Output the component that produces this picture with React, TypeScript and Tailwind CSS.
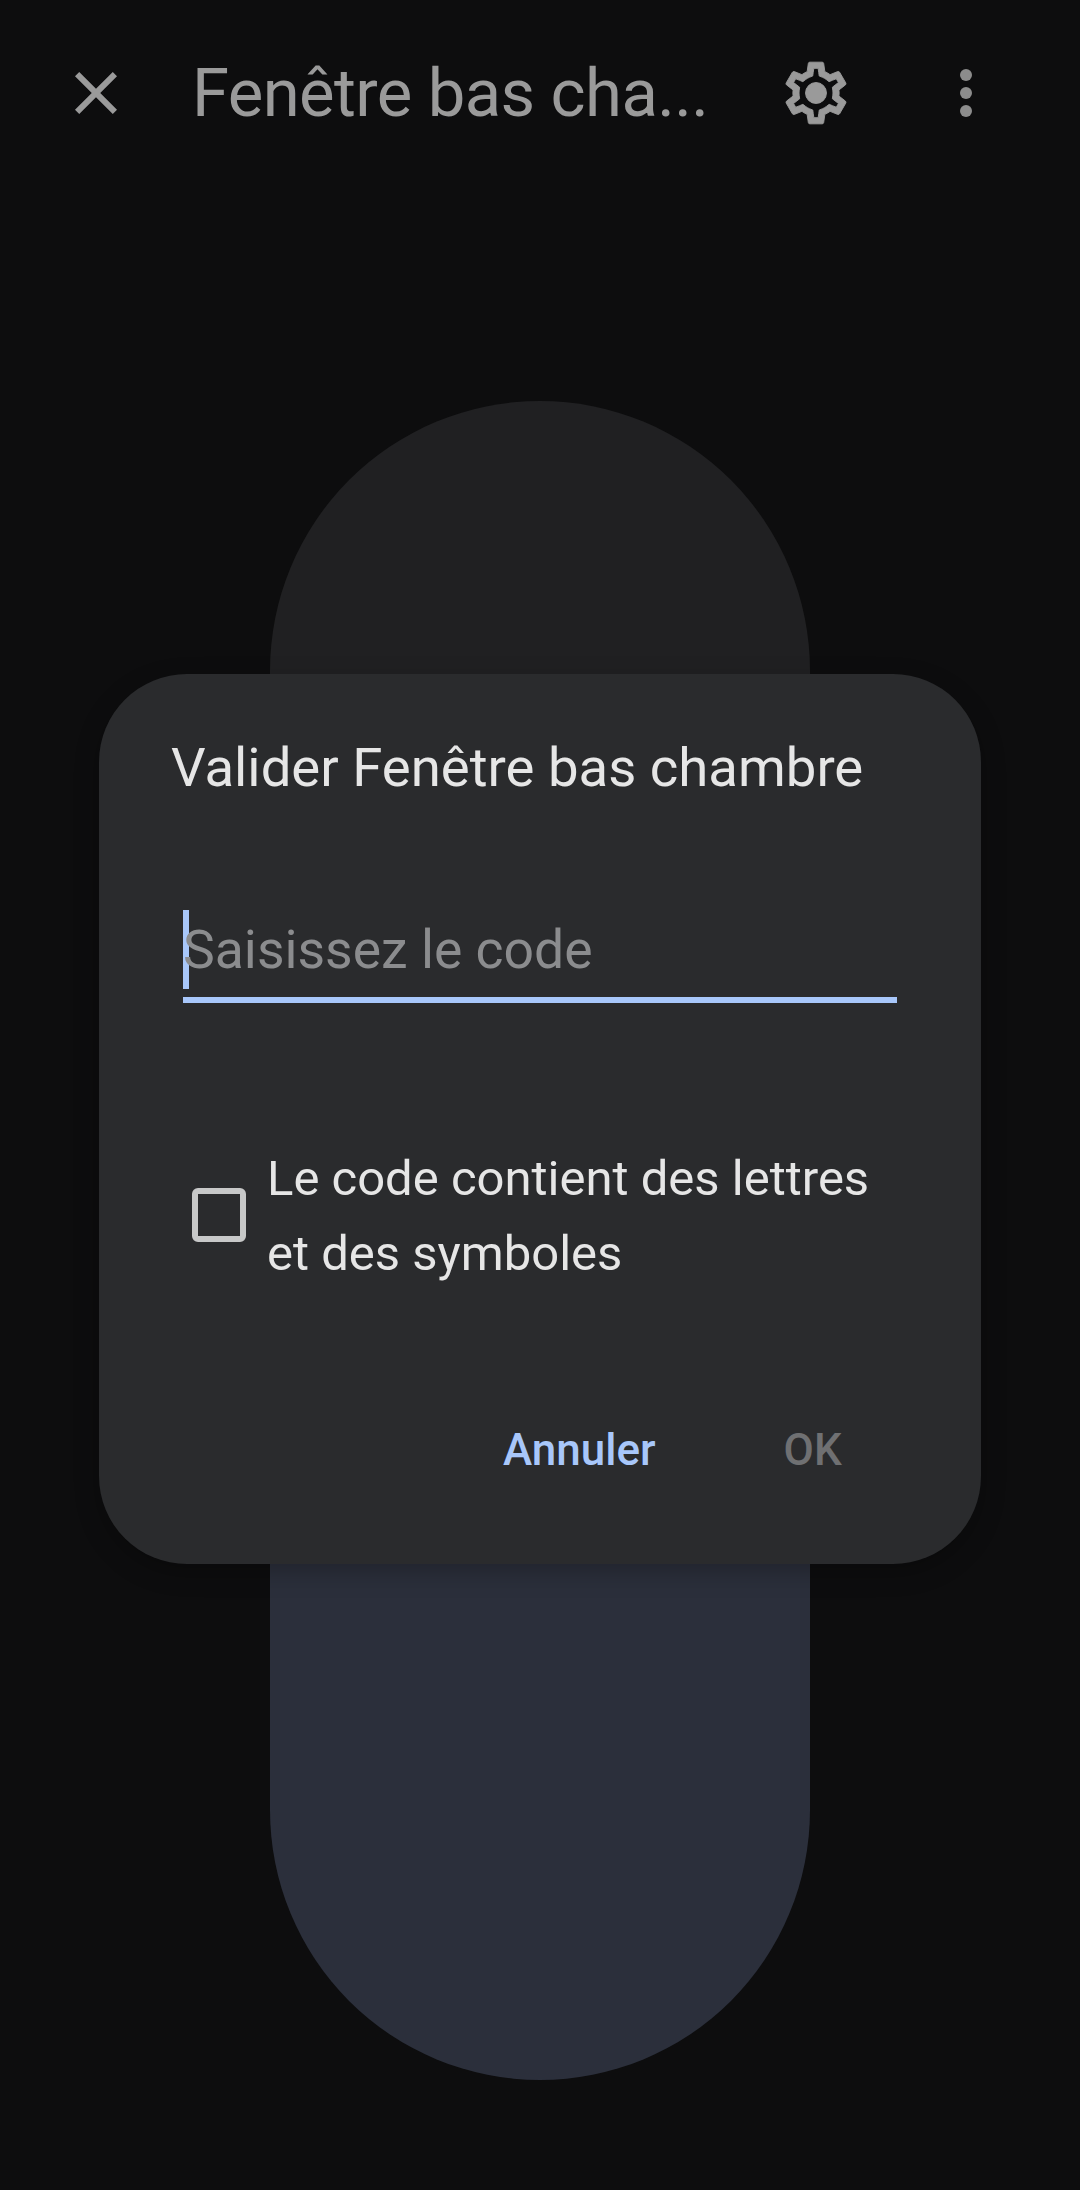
const sans = 'font-["Roboto",sans-serif]'

function Gear() {
  return (
    <svg viewBox="0 0 24 24" className="w-[74px] h-[74px] fill-[#9a9a9a] stroke-[#9a9a9a] stroke-[0.3]">
      <path d="M19.43 12.98c.04-.32.07-.64.07-.98 0-.34-.03-.66-.07-.98l2.11-1.65c.19-.15.24-.42.12-.64l-2-3.46c-.09-.16-.26-.25-.44-.25-.06 0-.12.01-.17.03l-2.49 1c-.52-.4-1.08-.73-1.69-.98l-.38-2.65C14.46 2.18 14.25 2 14 2h-4c-.25 0-.46.18-.49.42l-.38 2.65c-.61.25-1.17.59-1.69.98l-2.49-1c-.06-.02-.12-.03-.18-.03-.17 0-.34.09-.43.25l-2 3.46c-.13.22-.07.49.12.64l2.11 1.65c-.04.32-.07.65-.07.98 0 .33.03.66.07.98l-2.11 1.65c-.19.15-.24.42-.12.64l2 3.46c.09.16.26.25.44.25.06 0 .12-.01.17-.03l2.49-1c.52.4 1.08.73 1.69.98l.38 2.65c.03.24.24.42.49.42h4c.25 0 .46-.18.49-.42l.38-2.65c.61-.25 1.17-.59 1.69-.98l2.49 1c.06.02.12.03.18.03.17 0 .34-.09.43-.25l2-3.46c.12-.22.07-.49-.12-.64l-2.11-1.65zm-1.98-1.71c.04.31.05.52.05.73 0 .21-.02.43-.05.73l-.14 1.13.89.7 1.08.84-.7 1.21-1.27-.51-1.04-.42-.9.68c-.43.32-.84.56-1.25.73l-1.06.43-.16 1.13-.2 1.35h-1.4l-.19-1.35-.16-1.13-1.06-.43c-.43-.18-.83-.41-1.23-.71l-.91-.7-1.06.43-1.27.51-.7-1.21 1.08-.84.89-.7-.14-1.13c-.03-.31-.05-.54-.05-.74s.02-.43.05-.73l.14-1.13-.89-.7-1.08-.84.7-1.21 1.27.51 1.04.42.9-.68c.43-.32.84-.56 1.25-.73l1.06-.43.16-1.13.2-1.35h1.39l.19 1.35.16 1.13 1.06.43c.43.18.83.41 1.23.71l.91.7 1.06-.43 1.27-.51.7 1.21-1.07.85-.89.7.14 1.13z" />
      <circle cx="12" cy="12" r="3.4" />
    </svg>
  )
}

export default function App() {
  return (
    <div className={`relative w-[1080px] h-[2190px] bg-[#0d0d0e] overflow-hidden ${sans}`}>
      {/* top bar */}
      <div className="h-[186px] flex items-center text-[#9a9a9a]">
        <svg viewBox="0 0 24 24" className="ml-[60px] w-[72px] h-[72px] fill-[#9a9a9a] shrink-0">
          <path d="M19 6.41 17.59 5 12 10.59 6.41 5 5 6.41 10.59 12 5 17.59 6.41 19 12 13.41 17.59 19 19 17.59 13.41 12z" />
        </svg>
        <div className="ml-[60px] w-[587px] text-[67px] tracking-[-0.6px] leading-none whitespace-nowrap">Fenêtre bas cha...</div>
        <Gear />
        <div className="ml-[107px] flex flex-col gap-[6px]">
          <span className="block w-[12px] h-[12px] rounded-full bg-[#8c8c8c]" />
          <span className="block w-[12px] h-[12px] rounded-full bg-[#8c8c8c]" />
          <span className="block w-[12px] h-[12px] rounded-full bg-[#8c8c8c]" />
        </div>
      </div>

      {/* lock pill */}
      <div className="mt-[215px] mx-auto w-[540px] h-[1679px] rounded-full overflow-hidden flex flex-col">
        <div className="h-[840px] bg-[#202022]" />
        <div className="flex-1 bg-[#2b2f3b]" />
      </div>

      {/* code dialog */}
      <div className="absolute left-[99px] top-[674px] w-[882px] h-[890px] rounded-[88px] bg-[#2a2b2d] shadow-[0_8px_24px_rgba(0,0,0,0.25)] flex flex-col">
        <h1 className="mt-[61px] ml-[72px] text-[54.5px] leading-[64px] font-normal text-[#e6e6e6] whitespace-nowrap">Valider Fenêtre bas chambre</h1>
        <div className="mt-[111px] mx-[84px] h-[93px] border-b-[6px] border-[#a8c7fa] flex items-start">
          <span className="block w-[6px] h-[79px] bg-[#a8c7fa] shrink-0" />
          <span className="-ml-[6px] mt-[9px] text-[53.5px] leading-[62px] text-[#8b8c8e] whitespace-nowrap">Saisissez le code</span>
        </div>
        <div className="mt-[136px] ml-[93px] flex items-center">
          <span className="block w-[54px] h-[54px] rounded-[6px] border-[6px] border-[#c7c8c8] shrink-0" />
          <div className="ml-[21px] pt-[2px] text-[49px] leading-[75px] text-[#e6e6e6] whitespace-nowrap">
            <div>Le code contient des lettres</div>
            <div>et des symboles</div>
          </div>
        </div>
        <div className="mt-[133px] flex text-[44px] leading-[52px] font-medium">
          <span className="ml-[404px] text-[#a8c7fa]">Annuler</span>
          <span className="ml-[128px] text-[#6f7072]">OK</span>
        </div>
      </div>
    </div>
  )
}
